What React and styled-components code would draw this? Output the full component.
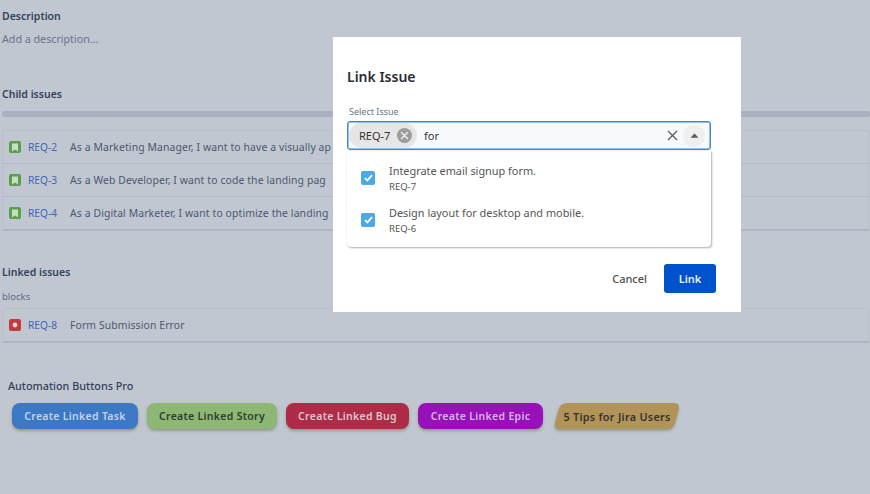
import React from 'react'
import styled, { createGlobalStyle } from 'styled-components'

// only the part of each summary that shows left of the modal
const childIssues = [
  { id: 'REQ-2', text: 'As a Marketing Manager, I want to have a visually ap' },
  { id: 'REQ-3', text: 'As a Web Developer, I want to code the landing pag' },
  { id: 'REQ-4', text: 'As a Digital Marketer, I want to optimize the landing' },
]

const buttons = [
  { label: 'Create Linked Task', bg: '#3d78c4', fg: '#c3d3e8', w: 126 },
  { label: 'Create Linked Story', bg: '#8cb873', fg: '#2f3d34', w: 130 },
  { label: 'Create Linked Bug', bg: '#ae2c47', fg: '#dcc6d0', w: 123 },
  { label: 'Create Linked Epic', bg: '#9710b8', fg: '#d3b6e0', w: 125 },
]

const options = [
  { title: 'Integrate email signup form.', id: 'REQ-7' },
  { title: 'Design layout for desktop and mobile.', id: 'REQ-6' },
]

export default function App() {
  return (
    <>
      <GlobalStyle />
      <Page>
        <Heading>Description</Heading>
        <Placeholder>Add a description...</Placeholder>

        <ChildHeading>Child issues</ChildHeading>
        <Progress />
        <IssueList>
          {childIssues.map((issue) => (
            <IssueRow key={issue.id}>
              <TypeIcon $color="#5a9f4c">
                <svg width="8" height="9" viewBox="0 0 8 9">
                  <path d="M1 0.5h6v8L4 6.4 1 8.5z" fill="#c9dcc4" />
                </svg>
              </TypeIcon>
              <IssueKey>{issue.id}</IssueKey>
              <IssueText>{issue.text}</IssueText>
            </IssueRow>
          ))}
        </IssueList>

        <LinkedHeading>Linked issues</LinkedHeading>
        <Relation>blocks</Relation>
        <LinkedList>
          <IssueRow>
            <TypeIcon $color="#c23c3e">
              <svg width="6" height="6" viewBox="0 0 6 6">
                <circle cx="3" cy="3" r="2.4" fill="#e6d3d6" />
              </svg>
            </TypeIcon>
            <IssueKey>REQ-8</IssueKey>
            <IssueText>Form Submission Error</IssueText>
          </IssueRow>
        </LinkedList>

        <PluginHeading>Automation Buttons Pro</PluginHeading>
        <ButtonRow>
          {buttons.map((b) => (
            <ActionButton key={b.label} $bg={b.bg} $fg={b.fg} $w={b.w}>{b.label}</ActionButton>
          ))}
          <TipsButton><span>5 Tips for Jira Users</span></TipsButton>
        </ButtonRow>
      </Page>

      <Modal>
        <ModalTitle>Link Issue</ModalTitle>
        <FieldLabel>Select Issue</FieldLabel>
        <SelectBox>
          <Chip>
            REQ-7
            <ChipRemove>
              <svg width="9" height="9" viewBox="0 0 9 9">
                <path d="M1.5 1.5l6 6M7.5 1.5l-6 6" stroke="#e8e8e8" strokeWidth="1.6" strokeLinecap="round" />
              </svg>
            </ChipRemove>
          </Chip>
          <SearchText>for</SearchText>
          <svg width="11" height="11" viewBox="0 0 11 11">
            <path d="M1 1l9 9M10 1l-9 9" stroke="#5f5f5f" strokeWidth="1.4" />
          </svg>
          <ArrowButton>
            <svg width="9" height="5" viewBox="0 0 9 5">
              <path d="M0.5 4.8L4.5 0.5l4 4.3z" fill="#5c5c5c" />
            </svg>
          </ArrowButton>
        </SelectBox>
        <Dropdown>
          {options.map((o) => (
            <Option key={o.id}>
              <Check>
                <svg width="9" height="8" viewBox="0 0 9 8">
                  <path d="M1 4.2l2.4 2.3L8 1.2" fill="none" stroke="#fff" strokeWidth="1.8" />
                </svg>
              </Check>
              <OptionBody>
                <OptionTitle>{o.title}</OptionTitle>
                <OptionKey>{o.id}</OptionKey>
              </OptionBody>
            </Option>
          ))}
        </Dropdown>
        <ModalFooter>
          <CancelButton>Cancel</CancelButton>
          <LinkButton>Link</LinkButton>
        </ModalFooter>
      </Modal>
    </>
  )
}

const GlobalStyle = createGlobalStyle`
  html, body {
    margin: 0;
    padding: 0;
    height: 100%;
    background: #c1c7d1;
    font-family: 'Noto Sans', 'Open Sans', sans-serif;
    overflow: hidden;
  }
`

const Page = styled.div`
  width: 870px;
  height: 494px;
  box-sizing: border-box;
  padding: 9px 0 0 2px;
  overflow: hidden;
`

const Heading = styled.div`
  font-size: 10.5px;
  line-height: 15px;
  font-weight: 600;
  color: #33415a;
`

const Placeholder = styled.div`
  margin-top: 8px;
  font-size: 10.7px;
  line-height: 15px;
  color: #68748a;
`

const ChildHeading = styled(Heading)`
  margin-top: 40px;
`

const Progress = styled.div`
  height: 6px;
  margin-top: 9px;
  border-radius: 3px;
  background: #a9b0bf;
`

const IssueList = styled.div`
  border-radius: 3px;
  border: 1px solid #bac0cb;
  border-bottom: 2px solid #aeb4c0;
  margin-top: 13px;
`

const LinkedList = styled(IssueList)`
  margin-top: 5px;
`

const IssueRow = styled.div`
  display: flex;
  align-items: center;
  height: 32px;
  padding-left: 6px;
  white-space: nowrap;
  & + & {
    border-top: 1px solid #b2b8c4;
  }
`

const TypeIcon = styled.span`
  width: 12px;
  height: 12px;
  border-radius: 2px;
  background: ${(p) => p.$color};
  display: flex;
  align-items: center;
  justify-content: center;
  flex: none;
`

const IssueKey = styled.span`
  margin-left: 7px;
  width: 42px;
  flex: none;
  font-size: 10.2px;
  color: #3f66b5;
`

const IssueText = styled.span`
  font-size: 10.4px;
  letter-spacing: 0.12px;
  color: #4a5870;
`

const LinkedHeading = styled(Heading)`
  margin-top: 34px;
`

const Relation = styled.div`
  margin-top: 10px;
  font-size: 9.5px;
  line-height: 13px;
  color: #5f6b80;
`

const PluginHeading = styled(Heading)`
  margin: 35px 0 0 6px;
  font-weight: 500;
  font-size: 10.8px;
`

const ButtonRow = styled.div`
  display: flex;
  align-items: center;
  margin: 10px 0 0 10px;
  gap: 9px;
`

const ActionButton = styled.div`
  width: ${(p) => p.$w}px;
  height: 26px;
  flex: none;
  display: flex;
  align-items: center;
  justify-content: center;
  border-radius: 8px;
  background: ${(p) => p.$bg};
  color: ${(p) => p.$fg};
  font-size: 10.5px;
  font-weight: 600;
  letter-spacing: 0.3px;
  box-shadow: 0 2px 3px rgba(90, 100, 60, 0.45);
`

const TipsButton = styled.div`
  position: relative;
  width: 128px;
  height: 26px;
  flex: none;
  margin-left: 1px;
  display: flex;
  align-items: center;
  justify-content: center;
  color: #33352f;
  font-size: 10.8px;
  font-weight: 600;
  letter-spacing: 0.3px;
  span {
    position: relative;
  }
  &::before {
    content: '';
    position: absolute;
    inset: 0 4px;
    border-radius: 6px;
    background: #b29358;
    transform: skewX(-15deg);
    box-shadow: 0 2px 3px rgba(90, 100, 60, 0.45);
  }
`

const Modal = styled.div`
  position: absolute;
  left: 333px;
  top: 37px;
  width: 408px;
  height: 275px;
  box-sizing: border-box;
  padding: 30px 30px 0 14px;
  background: #fff;
`

const ModalTitle = styled.div`
  font-size: 14px;
  line-height: 20px;
  font-weight: 600;
  color: #2b2b33;
`

const FieldLabel = styled.div`
  margin: 19px 0 3px 2px;
  font-size: 9px;
  line-height: 12px;
  color: #6b7484;
`

const SelectBox = styled.div`
  height: 29px;
  box-sizing: border-box;
  display: flex;
  align-items: center;
  padding: 0 5px 0 1px;
  border: 1px solid #3d87c9;
  border-radius: 3px;
  background: #f6fafd;
  box-shadow: inset 0 0 0 0.5px #3d87c9;
`

const Chip = styled.div`
  display: flex;
  align-items: center;
  height: 25px;
  width: 68px;
  box-sizing: border-box;
  padding: 0 5px 0 10px;
  justify-content: space-between;
  border-radius: 13px;
  background: #e6e6e6;
  font-size: 11px;
  color: #333;
`

const ChipRemove = styled.span`
  width: 15px;
  height: 15px;
  border-radius: 50%;
  background: #9c9c9c;
  display: flex;
  align-items: center;
  justify-content: center;
`

const SearchText = styled.span`
  flex: 1;
  margin-left: 7px;
  font-size: 11px;
  color: #333;
`

const ArrowButton = styled.span`
  width: 22px;
  height: 22px;
  margin-left: 5px;
  border-radius: 50%;
  background: #efefef;
  display: flex;
  align-items: center;
  justify-content: center;
`

const Dropdown = styled.div`
  height: 96px;
  margin-top: 1px;
  box-sizing: border-box;
  padding-top: 6px;
  background: #fff;
  border-radius: 0 0 4px 4px;
  box-shadow: 1px 1px 2px rgba(0, 0, 0, 0.3), 0 0 1px rgba(0, 0, 0, 0.25);
`

const Option = styled.div`
  display: flex;
  align-items: center;
  height: 42px;
  padding-left: 14px;
`

const Check = styled.span`
  width: 14px;
  height: 14px;
  margin-right: 14px;
  border-radius: 2px;
  background: #4fa8e6;
  display: flex;
  align-items: center;
  justify-content: center;
`

const OptionBody = styled.div`
  display: flex;
  flex-direction: column;
`

const OptionTitle = styled.span`
  font-size: 10.9px;
  line-height: 14px;
  color: #555;
`

const OptionKey = styled.span`
  margin-top: 2px;
  font-size: 9.5px;
  line-height: 13px;
  color: #555;
`

const ModalFooter = styled.div`
  display: flex;
  align-items: center;
  justify-content: flex-end;
  margin: 17px -5px 0 0;
  gap: 17px;
`

const CancelButton = styled.span`
  font-size: 11px;
  font-weight: 500;
  color: #4e4e4e;
`

const LinkButton = styled.span`
  width: 52px;
  height: 29px;
  display: flex;
  align-items: center;
  justify-content: center;
  border-radius: 3px;
  background: #0052cc;
  color: #e8effa;
  font-size: 11px;
  font-weight: 600;
`
